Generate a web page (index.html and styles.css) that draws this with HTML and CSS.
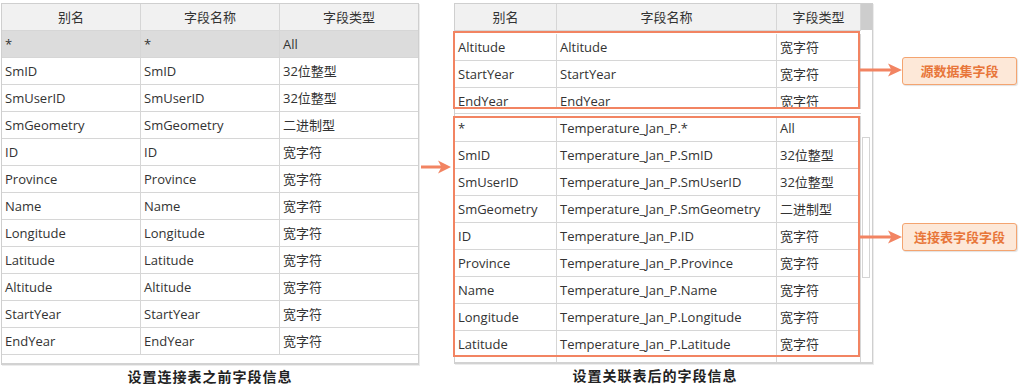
FILE: index.html
```html
<!DOCTYPE html>
<html lang="zh-CN">
<head>
<meta charset="utf-8">
<title>字段信息</title>
<link rel="stylesheet" href="styles.css">
</head>
<body>
<div class="page">
  <div class="panel panel-left">
    <div class="ltable">
      <div class="row head"><div class="c">别名</div><div class="c">字段名称</div><div class="c">字段类型</div></div>
      <div class="row sel"><div class="c">*</div><div class="c">*</div><div class="c">All</div></div>
      <div class="row"><div class="c">SmID</div><div class="c">SmID</div><div class="c">32位整型</div></div>
      <div class="row"><div class="c">SmUserID</div><div class="c">SmUserID</div><div class="c">32位整型</div></div>
      <div class="row"><div class="c">SmGeometry</div><div class="c">SmGeometry</div><div class="c">二进制型</div></div>
      <div class="row"><div class="c">ID</div><div class="c">ID</div><div class="c">宽字符</div></div>
      <div class="row"><div class="c">Province</div><div class="c">Province</div><div class="c">宽字符</div></div>
      <div class="row"><div class="c">Name</div><div class="c">Name</div><div class="c">宽字符</div></div>
      <div class="row"><div class="c">Longitude</div><div class="c">Longitude</div><div class="c">宽字符</div></div>
      <div class="row"><div class="c">Latitude</div><div class="c">Latitude</div><div class="c">宽字符</div></div>
      <div class="row"><div class="c">Altitude</div><div class="c">Altitude</div><div class="c">宽字符</div></div>
      <div class="row"><div class="c">StartYear</div><div class="c">StartYear</div><div class="c">宽字符</div></div>
      <div class="row"><div class="c">EndYear</div><div class="c">EndYear</div><div class="c">宽字符</div></div>
      <div class="lfill"></div>
    </div>
    <div class="caption">设置连接表之前字段信息</div>
  </div>

  <div class="mid">
    <svg class="arrow-mid" width="31" height="14" viewBox="0 0 31 14">
      <rect x="0" y="5.5" width="24" height="3" fill="#f28462"/>
      <path d="M17 0.5 L30 7 L17 13.5 L20.5 7 Z" fill="#f28462"/>
    </svg>
  </div>

  <div class="panel panel-right">
    <div class="rtable">
      <div class="rmain">
        <div class="row head"><div class="c">别名</div><div class="c">字段名称</div><div class="c">字段类型</div></div>
        <div class="group g1">
          <div class="ginner">
            <div class="row"><div class="c">Altitude</div><div class="c">Altitude</div><div class="c">宽字符</div></div>
            <div class="row"><div class="c">StartYear</div><div class="c">StartYear</div><div class="c">宽字符</div></div>
            <div class="row"><div class="c">EndYear</div><div class="c">EndYear</div><div class="c">宽字符</div></div>
          </div>
        </div>
        <div class="split"></div>
        <div class="group g2">
          <div class="ginner">
            <div class="row"><div class="c">*</div><div class="c">Temperature_Jan_P.*</div><div class="c">All</div></div>
            <div class="row"><div class="c">SmID</div><div class="c">Temperature_Jan_P.SmID</div><div class="c">32位整型</div></div>
            <div class="row"><div class="c">SmUserID</div><div class="c">Temperature_Jan_P.SmUserID</div><div class="c">32位整型</div></div>
            <div class="row"><div class="c">SmGeometry</div><div class="c">Temperature_Jan_P.SmGeometry</div><div class="c">二进制型</div></div>
            <div class="row"><div class="c">ID</div><div class="c">Temperature_Jan_P.ID</div><div class="c">宽字符</div></div>
            <div class="row"><div class="c">Province</div><div class="c">Temperature_Jan_P.Province</div><div class="c">宽字符</div></div>
            <div class="row"><div class="c">Name</div><div class="c">Temperature_Jan_P.Name</div><div class="c">宽字符</div></div>
            <div class="row"><div class="c">Longitude</div><div class="c">Temperature_Jan_P.Longitude</div><div class="c">宽字符</div></div>
            <div class="row"><div class="c">Latitude</div><div class="c">Temperature_Jan_P.Latitude</div><div class="c">宽字符</div></div>
          </div>
        </div>
        <div class="row rfill"><div class="c"></div><div class="c"></div><div class="c"></div></div>
      </div>
      <div class="rscroll">
        <div class="rs-head"></div>
        <div class="rs-thumb"></div>
      </div>
    </div>
    <div class="caption caption-r">设置关联表后的字段信息</div>
  </div>

  <svg class="arrow-side a1" width="44" height="14" viewBox="0 0 44 14">
    <rect x="0" y="5.5" width="36" height="3" fill="#f28462"/>
    <path d="M29 0.5 L43 7 L29 13.5 L32.5 7 Z" fill="#f28462"/>
  </svg>
  <svg class="arrow-side a2" width="44" height="14" viewBox="0 0 44 14">
    <rect x="0" y="5.5" width="36" height="3" fill="#f28462"/>
    <path d="M29 0.5 L43 7 L29 13.5 L32.5 7 Z" fill="#f28462"/>
  </svg>
  <div class="callout c1">源数据集字段</div>
  <div class="callout c2">连接表字段字段</div>
</div>
</body>
</html>
```

FILE: styles.css
```css
* { box-sizing: border-box; }
html, body { margin: 0; padding: 0; background: #fff; }
body {
  font-family: "Open Sans", "Noto Sans CJK SC", sans-serif;
  font-size: 13px;
  color: #333;
}
.page {
  position: relative;
  width: 1019px;
  height: 387px;
  display: flex;
  align-items: flex-start;
  padding-top: 3px;
  overflow: hidden;
}
.panel { display: flex; flex-direction: column; }
.panel-left { margin-left: 1px; width: 418px; }

.ltable {
  width: 418px;
  border: 1px solid #cfcfcf;
  border-bottom: 2px solid #d2d2d2;
  box-shadow: 1px 1px 0 #ececec;
}
.row {
  display: grid;
  height: 27px;
  border-bottom: 1px solid #d6d6d6;
}
.ltable .row { grid-template-columns: 139px 139px 1fr; }
.c {
  padding-left: 3px;
  line-height: 26px;
  white-space: nowrap;
  overflow: hidden;
  border-right: 1px solid #d6d6d6;
}
.c:last-child { border-right: none; }
.head { background: #f1f1f1; }
.head .c { text-align: center; padding-left: 0; }
.sel { background: #dcdcdc; }
.lfill { height: 8px; }

.caption {
  margin-top: 4px;
  text-align: center;
  font-weight: bold;
  font-size: 14px;
  letter-spacing: 1px;
  line-height: 16px;
  color: #222;
}
.caption-r { padding-right: 17px; }

.mid { width: 35px; padding-top: 157px; padding-left: 2px; }
.arrow-mid { display: block; }

.panel-right { width: 419px; }
.rtable {
  display: flex;
  width: 419px;
  border: 1px solid #cfcfcf;
  border-bottom: 2px solid #d2d2d2;
  box-shadow: 1px 1px 0 #ececec;
}
.rmain { width: 406px; }
.rmain .row { grid-template-columns: 102px 220px 84px; }
.rmain .c:last-child { border-right: 1px solid #d6d6d6; }
.group { position: relative; overflow: hidden; }
.group::after {
  content: "";
  position: absolute;
  top: 0; bottom: 0;
  left: -2px; right: 1px;
  border: 2px solid #f28462;
}
.g1 { height: 78px; margin-top: 0; overflow: visible; }
.g1 .ginner { height: 78px; overflow: hidden; padding-top: 3px; }
.g2 { height: 241px; overflow: visible; }
.g2 .ginner { height: 241px; overflow: hidden; }
.g2 .ginner .row:first-child { margin-top: -1px; }
.split { height: 7px; position: relative; }
.split::before {
  content: "";
  display: block;
  height: 4px;
  border-bottom: 1px solid #d6d6d6;
}
.rfill { height: 5px; border-bottom: none; }

.rscroll { width: 11px; }
.rs-head { height: 26px; background: #cdcdcd; border-bottom: 1px solid #cdcdcd; }
.rs-thumb {
  margin: 107px 2px 0 1px;
  height: 141px;
  border: 1px solid #d4d4d4;
}

.arrow-side { position: absolute; left: 859px; }
.a1 { top: 63px; }
.a2 { top: 230px; }
.callout {
  position: absolute;
  left: 902px;
  width: 115px;
  height: 28px;
  line-height: 26px;
  text-align: center;
  background: #fde8d8;
  border: 1px solid #f4a470;
  border-radius: 3px;
  box-shadow: 1px 1px 1px rgba(0,0,0,0.12);
  color: #e8763a;
  font-size: 13px;
  font-weight: bold;
}
.c1 { top: 57px; }
.c2 { top: 223px; }
```
